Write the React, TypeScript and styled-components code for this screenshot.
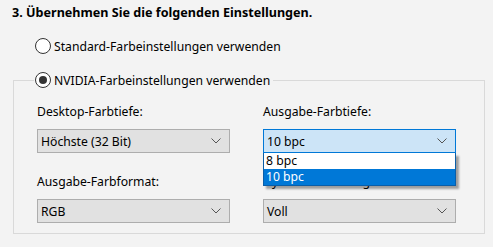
import React from "react";
import styled, { createGlobalStyle } from "styled-components";

const Global = createGlobalStyle`
  html, body { margin: 0; padding: 0; background: #f3f3f3; }
  body { font-family: "Noto Sans", "Open Sans", sans-serif; font-size: 12.2px; color: #000; }
`;

const Page = styled.div`
  width: 493px;
  height: 247px;
  overflow: hidden;
  box-sizing: border-box;
  padding: 4px 8px 0 13px;
`;

const Title = styled.div`
  font-weight: bold;
  font-size: 12.6px;
  line-height: 18px;
  margin-left: -1px;
`;

const RadioRow = styled.label`
  display: flex;
  align-items: center;
  gap: 3px;
  height: 18px;
`;

const RadioCircle = styled.span<{ $checked?: boolean }>`
  box-sizing: border-box;
  width: 16px;
  height: 16px;
  border-radius: 50%;
  border: 1px solid #333;
  background: #fff;
  display: flex;
  align-items: center;
  justify-content: center;
  &::after {
    content: "";
    display: ${(p) => (p.$checked ? "block" : "none")};
    width: 8px;
    height: 8px;
    border-radius: 50%;
    background: #333;
  }
`;

const FirstOption = styled.div`
  margin-top: 15px;
  padding-left: 22px;
`;

const Group = styled.fieldset`
  margin: 16px 0 0 0;
  padding: 0 0 19px 23px;
  border: 1px solid #d9d9d9;
  height: 163px;
  box-sizing: border-box;
  min-width: 0;
`;

const Legend = styled.legend`
  margin-left: -3px;
  padding: 0 3px 0 1px;
`;

const Grid = styled.div`
  display: grid;
  grid-template-columns: 193px 193px;
  column-gap: 33px;
  margin-top: 14px;
`;

const Field = styled.div`
  position: relative;
  display: flex;
  flex-direction: column;
  height: 70px;
`;

const Label = styled.div`
  height: 18px;
  line-height: 18px;
  margin-bottom: 8px;
`;

const Select = styled.div<{ $focused?: boolean }>`
  box-sizing: border-box;
  height: 24px;
  display: flex;
  align-items: center;
  justify-content: space-between;
  padding: 0 8px 0 3px;
  background: ${(p) => (p.$focused ? "#cce4f7" : "#e1e1e1")};
  border: 1px solid ${(p) => (p.$focused ? "#0078d7" : "#adadad")};
`;

const List = styled.div`
  position: absolute;
  left: 0;
  right: 0;
  top: 50px;
  box-sizing: border-box;
  border: 1px solid #0a5ea8;
  border-top: none;
  background: #fff;
  box-shadow: 3px 3px 2px rgba(0, 0, 0, 0.35);
  z-index: 2;
`;

const Item = styled.div<{ $selected?: boolean }>`
  height: 16px;
  line-height: 16px;
  padding-left: 2px;
  background: ${(p) => (p.$selected ? "#0078d7" : "#fff")};
  color: ${(p) => (p.$selected ? "#fff" : "#000")};
`;

const Chevron = () => (
  <svg width="10" height="6" viewBox="0 0 10 6">
    <path d="M0.5 0.5 L5 5 L9.5 0.5" fill="none" stroke="#555" strokeWidth="1" />
  </svg>
);

export default function App() {
  return (
    <>
      <Global />
      <Page>
        <Title>3. Übernehmen Sie die folgenden Einstellungen.</Title>
        <FirstOption>
          <RadioRow>
            <RadioCircle />
            Standard-Farbeinstellungen verwenden
          </RadioRow>
        </FirstOption>
        <Group>
          <Legend>
            <RadioRow>
              <RadioCircle $checked />
              NVIDIA-Farbeinstellungen verwenden
            </RadioRow>
          </Legend>
          <Grid>
            <Field>
              <Label>Desktop-Farbtiefe:</Label>
              <Select>
                Höchste (32 Bit)
                <Chevron />
              </Select>
            </Field>
            <Field>
              <Label>Ausgabe-Farbtiefe:</Label>
              <Select $focused>
                10 bpc
                <Chevron />
              </Select>
              <List>
                <Item>8 bpc</Item>
                <Item $selected>10 bpc</Item>
              </List>
            </Field>
            <Field>
              <Label>Ausgabe-Farbformat:</Label>
              <Select>
                RGB
                <Chevron />
              </Select>
            </Field>
            <Field>
              <Label>Dynamischer Ausgabebereich:</Label>
              <Select>
                Voll
                <Chevron />
              </Select>
            </Field>
          </Grid>
        </Group>
      </Page>
    </>
  );
}
